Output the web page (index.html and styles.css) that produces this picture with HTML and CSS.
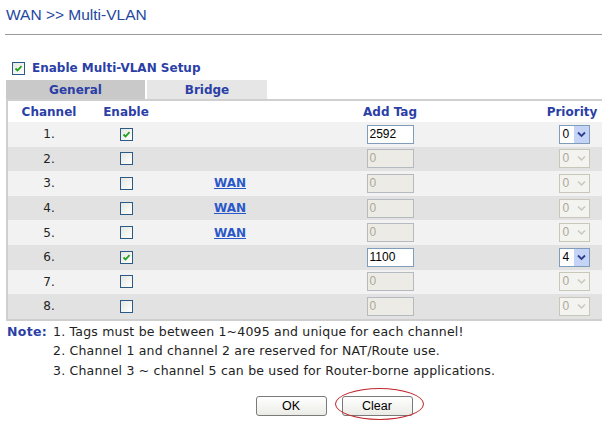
FILE: index.html
```html
<!DOCTYPE html>
<html>
<head>
<meta charset="utf-8">
<link rel="stylesheet" href="styles.css">
</head>
<body>
<div class="page">
  <div class="title-bar"><h1 class="title">WAN &gt;&gt; Multi-VLAN</h1></div>
  <div class="enable-row">
    <span class="cb checked"><svg viewBox="0 0 13 13" width="13" height="13"><path d="M3.5 6.5 L5.5 8.5 L9.5 4.2" fill="none" stroke="#21a121" stroke-width="1.8"/></svg></span>
    <span class="enable-label">Enable Multi-VLAN Setup</span>
  </div>
  <div class="tabs">
    <div class="tab active">General</div>
    <div class="tab">Bridge</div>
  </div>
  <div class="grid">
    <div class="row head">
      <div class="c">Channel</div>
      <div class="c">Enable</div>
      <div class="c"></div>
      <div class="c">Add Tag</div>
      <div class="c"></div>
      <div class="c">Priority</div>
    </div>
    <div class="row light">
      <div class="c num">1.</div>
      <div class="c"><span class="cb checked"><svg viewBox="0 0 13 13" width="13" height="13"><path d="M3.5 6.5 L5.5 8.5 L9.5 4.2" fill="none" stroke="#21a121" stroke-width="1.8"/></svg></span></div>
      <div class="c"></div>
      <div class="c"><span class="inp">2592</span></div>
      <div class="c"></div>
      <div class="c"><span class="sel"><span class="val">0</span><span class="arr"><svg viewBox="0 0 15 17" width="15" height="17"><path d="M4 6.5 L7.5 10 L11 6.5" fill="none" stroke="#2d3f8f" stroke-width="1.8"/></svg></span></span></div>
    </div>
    <div class="row dark">
      <div class="c num">2.</div>
      <div class="c"><span class="cb"></span></div>
      <div class="c"></div>
      <div class="c"><span class="inp dis">0</span></div>
      <div class="c"></div>
      <div class="c"><span class="sel dis"><span class="val">0</span><span class="arr"><svg viewBox="0 0 15 17" width="15" height="17"><path d="M4 6.5 L7.5 10 L11 6.5" fill="none" stroke="#c9c7ba" stroke-width="1.5"/></svg></span></span></div>
    </div>
    <div class="row light">
      <div class="c num">3.</div>
      <div class="c"><span class="cb"></span></div>
      <div class="c"><a class="wan" href="#">WAN</a></div>
      <div class="c"><span class="inp dis">0</span></div>
      <div class="c"></div>
      <div class="c"><span class="sel dis"><span class="val">0</span><span class="arr"><svg viewBox="0 0 15 17" width="15" height="17"><path d="M4 6.5 L7.5 10 L11 6.5" fill="none" stroke="#c9c7ba" stroke-width="1.5"/></svg></span></span></div>
    </div>
    <div class="row dark">
      <div class="c num">4.</div>
      <div class="c"><span class="cb"></span></div>
      <div class="c"><a class="wan" href="#">WAN</a></div>
      <div class="c"><span class="inp dis">0</span></div>
      <div class="c"></div>
      <div class="c"><span class="sel dis"><span class="val">0</span><span class="arr"><svg viewBox="0 0 15 17" width="15" height="17"><path d="M4 6.5 L7.5 10 L11 6.5" fill="none" stroke="#c9c7ba" stroke-width="1.5"/></svg></span></span></div>
    </div>
    <div class="row light">
      <div class="c num">5.</div>
      <div class="c"><span class="cb"></span></div>
      <div class="c"><a class="wan" href="#">WAN</a></div>
      <div class="c"><span class="inp dis">0</span></div>
      <div class="c"></div>
      <div class="c"><span class="sel dis"><span class="val">0</span><span class="arr"><svg viewBox="0 0 15 17" width="15" height="17"><path d="M4 6.5 L7.5 10 L11 6.5" fill="none" stroke="#c9c7ba" stroke-width="1.5"/></svg></span></span></div>
    </div>
    <div class="row dark">
      <div class="c num">6.</div>
      <div class="c"><span class="cb checked"><svg viewBox="0 0 13 13" width="13" height="13"><path d="M3.5 6.5 L5.5 8.5 L9.5 4.2" fill="none" stroke="#21a121" stroke-width="1.8"/></svg></span></div>
      <div class="c"></div>
      <div class="c"><span class="inp">1100</span></div>
      <div class="c"></div>
      <div class="c"><span class="sel"><span class="val">4</span><span class="arr"><svg viewBox="0 0 15 17" width="15" height="17"><path d="M4 6.5 L7.5 10 L11 6.5" fill="none" stroke="#2d3f8f" stroke-width="1.8"/></svg></span></span></div>
    </div>
    <div class="row light">
      <div class="c num">7.</div>
      <div class="c"><span class="cb"></span></div>
      <div class="c"></div>
      <div class="c"><span class="inp dis">0</span></div>
      <div class="c"></div>
      <div class="c"><span class="sel dis"><span class="val">0</span><span class="arr"><svg viewBox="0 0 15 17" width="15" height="17"><path d="M4 6.5 L7.5 10 L11 6.5" fill="none" stroke="#c9c7ba" stroke-width="1.5"/></svg></span></span></div>
    </div>
    <div class="row dark">
      <div class="c num">8.</div>
      <div class="c"><span class="cb"></span></div>
      <div class="c"></div>
      <div class="c"><span class="inp dis">0</span></div>
      <div class="c"></div>
      <div class="c"><span class="sel dis"><span class="val">0</span><span class="arr"><svg viewBox="0 0 15 17" width="15" height="17"><path d="M4 6.5 L7.5 10 L11 6.5" fill="none" stroke="#c9c7ba" stroke-width="1.5"/></svg></span></span></div>
    </div>
  </div>
  <div class="notes">
    <div class="note-label">Note:</div>
    <div class="note-list">
      <div>1. Tags must be between 1~4095 and unique for each channel!</div>
      <div>2. Channel 1 and channel 2 are reserved for NAT/Route use.</div>
      <div>3. Channel 3 ~ channel 5 can be used for Router-borne applications.</div>
    </div>
  </div>
  <div class="buttons">
    <span class="btn">OK</span>
    <span class="btn circled">Clear<span class="ring"></span></span>
  </div>
</div>
</body>
</html>
```
FILE: styles.css
```css
html, body { margin: 0; padding: 0; background: #fff; overflow: hidden; }
.page { width: 602px; height: 422px; position: relative; font-family: "DejaVu Sans", Verdana, sans-serif; }
.title-bar { margin-left: 5px; height: 35px; border-bottom: 1px solid #9a9a9a; box-sizing: border-box; }
.title { margin: 0; padding: 6px 0 0 1px; font-family: "Liberation Sans", Arial, sans-serif; font-weight: normal; font-size: 15.5px; line-height: 17px; color: #2447a0; }
.enable-row { display: flex; align-items: center; margin: 26px 0 0 12px; height: 14px; gap: 7px; }
.enable-label { font-weight: bold; font-size: 12px; color: #2b3fa6; }
.cb { display: inline-flex; width: 11px; height: 11px; border: 1px solid #2a5a87; background: linear-gradient(135deg, #e6e6e0, #ffffff); box-sizing: content-box; }
.cb svg { margin: -1px; }
.tabs { display: flex; margin: 5px 0 0 6px; height: 19px; gap: 2px; }
.tab { display: flex; align-items: center; justify-content: center; font-weight: bold; font-size: 12px; color: #2b3fa6; background: #e6e6e6; width: 120px; }
.tab.active { background: #c9c9c9; width: 139px; }
.grid { margin-left: 6px; border-top: 2px solid #cfcfcf; border-left: 2px solid #cfcfcf; border-bottom: 2px solid #cfcfcf; width: 600px; }
.row { display: grid; grid-template-columns: 82px 72px 136px 184px 60px 60px; align-items: center; height: 24.6px; }
.row.head { height: 21px; background: #fff; font-weight: bold; font-size: 12px; color: #2b3fa6; }
.row.light { background: #f2f2f2; }
.row.dark { background: #e2e2e2; }
.c { display: flex; justify-content: center; align-items: center; }
.num { font-size: 12px; color: #222; }
.wan { font-weight: bold; font-size: 12px; color: #2a58c9; text-decoration: underline; }
.inp { box-sizing: border-box; width: 47px; height: 19px; border: 1px solid #7f9db9; background: #fff; font-family: "Liberation Sans", Arial, sans-serif; font-size: 12px; color: #000; padding-left: 2px; line-height: 17px; }
.inp.dis { background: #ecebe6; border-color: #b5b9c0; color: #aca899; }
.sel { box-sizing: border-box; width: 31px; height: 19px; border: 1px solid #7f9db9; background: #fff; display: flex; font-family: "Liberation Sans", Arial, sans-serif; font-size: 12px; line-height: 17px; position: relative; left: 2px; }
.sel .val { flex: 1; padding-left: 3px; color: #000; }
.sel .arr { width: 15px; height: 17px; background: #c4d3f6; display: flex; }
.sel.dis { background: #f3f3f0; border-color: #c9c7ba; }
.sel.dis .val { color: #aca899; }
.sel.dis .arr { background: #f3f3f0; }
.notes { display: flex; margin: 1px 0 0 7px; font-size: 12.5px; letter-spacing: 0.2px; line-height: 19.5px; color: #222; }
.note-label { font-weight: bold; color: #2b3fa6; width: 46px; letter-spacing: 0.3px; }
.buttons { display: flex; justify-content: center; gap: 15px; margin-top: 16px; margin-left: 66px; }
.btn { box-sizing: border-box; width: 71px; height: 20px; border: 1px solid #7a7a7a; border-radius: 3px; background: linear-gradient(#ffffff, #ebebe6); font-family: "Liberation Sans", Arial, sans-serif; font-size: 12.5px; display: flex; align-items: center; justify-content: center; color: #000; }
.circled { position: relative; }
.ring { position: absolute; left: -8px; top: -9px; width: 89px; height: 32px; border: 1px solid #c0272d; border-radius: 50%; box-sizing: border-box; }
```
